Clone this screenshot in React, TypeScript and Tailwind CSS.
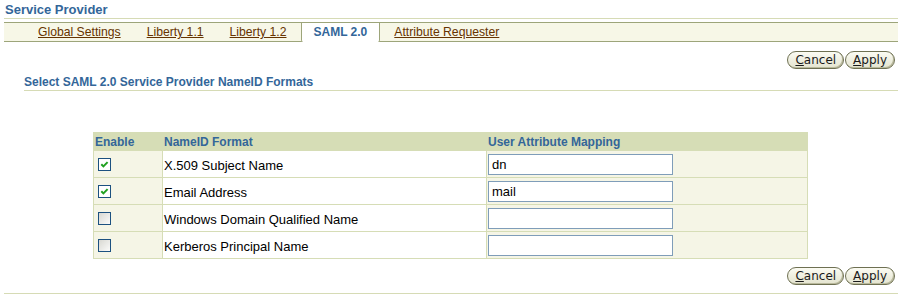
import React from "react";

const rows = [
  { checked: true, name: "X.509 Subject Name", value: "dn" },
  { checked: true, name: "Email Address", value: "mail" },
  { checked: false, name: "Windows Domain Qualified Name", value: "" },
  { checked: false, name: "Kerberos Principal Name", value: "" },
];

function Checkbox({ checked }: { checked: boolean }) {
  return (
    <div
      className={
        "w-[13px] h-[13px] border border-[#1c5180] flex items-center justify-center " +
        (checked ? "bg-white" : "bg-gradient-to-br from-[#d8d8d2] to-[#fbfbfa]")
      }
    >
      {checked && (
        <svg width="9" height="9" viewBox="0 0 9 9">
          <path d="M1.3 4.3 L3.4 6.4 L7.6 2.1" fill="none" stroke="#21a121" strokeWidth="2" />
        </svg>
      )}
    </div>
  );
}

function PillButton({ label }: { label: string }) {
  return (
    <button className="h-[18px] px-[7px] rounded-[9px] border border-[#6e7052] bg-gradient-to-b from-[#fbfbf3] to-[#e4e4cf] shadow-[inset_-1px_-1px_0_#b9b99c] font-['DejaVu_Sans',sans-serif] text-[12px] leading-[16px] text-[#1a1a1a]">
      <span className="underline">{label[0]}</span>
      {label.slice(1)}
    </button>
  );
}

function ButtonRow() {
  return (
    <div className="flex justify-end gap-[1px] pr-[3px]">
      <PillButton label="Cancel" />
      <PillButton label="Apply" />
    </div>
  );
}

export default function App() {
  const tabs = ["Global Settings", "Liberty 1.1", "Liberty 1.2"];
  return (
    <div className="w-[903px] h-[299px] bg-white font-['Liberation_Sans',Arial,sans-serif] text-[12px] overflow-hidden">
      <div className="pl-[4px] pr-[5px]">
        <h1 className="pt-[1px] pl-[1px] text-[13px] leading-[17px] font-bold text-[#336699] border-b border-[#d6dbb5]">
          Service Provider
        </h1>

        {/* tab bar */}
        <div className="mt-[3px] h-[20px] flex border-y border-[#9da57a] bg-[#f7f7e7] pl-[21px] text-[12.2px]">
          {tabs.map((t) => (
            <a key={t} className="px-[13px] leading-[18px] text-[#663300] underline">
              {t}
            </a>
          ))}
          <div className="relative -mb-px ml-[1px] h-[19px] px-[12px] bg-white border-x border-[#9da57a] rounded-b-[2px] text-[12px] font-bold text-[#336699] leading-[18px]">
            SAML 2.0
          </div>
          <a className="px-[14px] leading-[18px] text-[#663300] underline">Attribute Requester</a>
        </div>

        <div className="mt-[9px]">
          <ButtonRow />
        </div>

        <h2 className="mt-[6px] ml-[20px] text-[12px] leading-[14px] pb-[1px] font-bold text-[#336699] border-b border-[#d6dbb5]">
          Select SAML 2.0 Service Provider NameID Formats
        </h2>

        <div className="mt-[41px] ml-[89px] w-[715px]">
          <table className="w-full border-collapse">
            <thead>
              <tr className="bg-[#d6ddb6] h-[18px]">
                <th className="w-[69px] border border-[#d6ddb6] pl-px text-left font-bold text-[#336699] leading-[16px]">Enable</th>
                <th className="w-[324px] border border-[#d6ddb6] border-l-white pl-px text-left font-bold text-[#336699] leading-[16px]">NameID Format</th>
                <th className="border border-[#d6ddb6] border-l-white pl-px text-left font-bold text-[#336699] leading-[16px]">User Attribute Mapping</th>
              </tr>
            </thead>
            <tbody>
              {rows.map((r) => (
                <tr key={r.name} className="h-[27px]">
                  <td className="border border-[#d6ddb6] bg-[#f5f5e6] pl-[4px] align-middle">
                    <Checkbox checked={r.checked} />
                  </td>
                  <td className="border border-[#d6ddb6] bg-white pl-px pt-[3px] align-middle text-[13px] text-black">{r.name}</td>
                  <td className="border border-[#d6ddb6] bg-[#f5f5e6] pl-px align-middle">
                    <input
                      readOnly
                      value={r.value}
                      className="block w-[185px] h-[21px] border border-[#7f9db9] bg-white px-[3px] font-['Liberation_Sans',Arial,sans-serif] text-[13px] text-black outline-none"
                    />
                  </td>
                </tr>
              ))}
            </tbody>
          </table>
        </div>

        <div className="mt-[8px]">
          <ButtonRow />
        </div>
        <div className="mt-[8px] border-b border-[#d6dbb5]" />
      </div>
    </div>
  );
}
